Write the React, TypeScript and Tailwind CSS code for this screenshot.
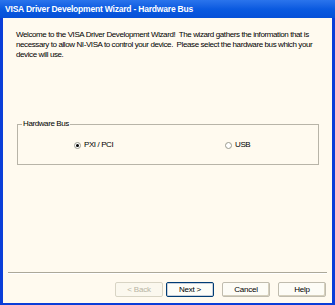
import React from "react";

function Btn({ label, disabled, def }: { label: string; disabled?: boolean; def?: boolean }) {
  return (
    <div
      className={
        "w-[48px] h-[15px] flex items-center justify-center text-[8px] tracking-[-0.2px] leading-none rounded-[2px] " +
        (def
          ? "border border-[#003c74] bg-[#fdfdf8] text-black shadow-[inset_0_0_0_1px_#c8d0dc]"
          : disabled
          ? "border border-[#d8d4c4] bg-[#fbf8ee] text-[#b8b4a4]"
          : "border border-[#c0bcae] bg-[#fdfcf6] text-black shadow-[inset_-1px_-1px_0_#d6d0bd]")
      }
    >
      {label}
    </div>
  );
}

export default function App() {
  return (
    <div
      className="w-[335px] h-[305px] flex flex-col bg-[#0a3ed8] overflow-hidden"
      style={{ fontFamily: "'Liberation Sans', Arial, sans-serif" }}
    >
      <div className="h-[18px] shrink-0 flex items-center pl-[5px] bg-gradient-to-b from-[#2a74ec] via-[#0a5ae0] to-[#0650d8] text-white text-[8.5px] tracking-[-0.2px] font-bold">
        VISA Driver Development Wizard - Hardware Bus
      </div>
      <div className="flex-1 flex flex-col mx-[3px] mb-[2px] bg-[#fffaef] text-black text-[8px] tracking-[-0.4px]">
        <div className="pl-[13px] pr-[14px] pt-[12px] leading-[10px]">
          Welcome to the VISA Driver Development Wizard!&nbsp; The wizard gathers the information that is necessary to allow NI-VISA to control your device.&nbsp; Please select the hardware bus which your device will use.
        </div>
        <div className="mt-[64px] ml-[14px] mr-[13px] h-[41px] relative border border-[#b8b4a8]">
          <span className="absolute -top-[6px] left-[4px] px-[1px] bg-[#fffaef] leading-[10px]">Hardware Bus</span>
          <div className="flex items-center h-full pt-[1px]">
            <div className="flex items-center gap-[3px] ml-[56px] w-[151px]">
              <span className="w-[7px] h-[7px] rounded-full border border-[#9a9a8e] bg-white flex items-center justify-center">
                <span className="w-[3px] h-[3px] rounded-full bg-black" />
              </span>
              <span>PXI / PCI</span>
            </div>
            <div className="flex items-center gap-[3px]">
              <span className="w-[7px] h-[7px] rounded-full border border-[#9a9a8e] bg-white" />
              <span>USB</span>
            </div>
          </div>
        </div>
        <div className="flex-1" />
        <div className="mx-[5px] h-0 border-t border-[#aca899] border-b border-b-white" />
        <div className="flex justify-end items-center pr-[6px] pt-[8px] pb-[6px]">
          <Btn label="< Back" disabled />
          <div className="w-[3px]" />
          <Btn label="Next >" def />
          <div className="w-[8px]" />
          <Btn label="Cancel" />
          <div className="w-[8px]" />
          <Btn label="Help" />
        </div>
      </div>
    </div>
  );
}
